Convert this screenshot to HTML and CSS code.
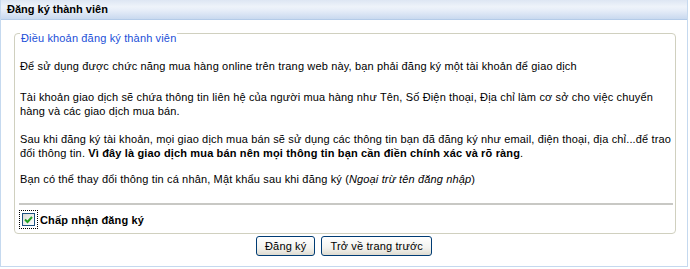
FILE: index.html
```html
<!DOCTYPE html>
<html lang="vi">
<head>
  <meta charset="utf-8">
  <title>Đăng ký thành viên</title>
  <link rel="stylesheet" href="styles.css">
</head>
<body>

<div class="panel">
  <div class="panel__head">Đăng ký thành viên</div>

  <div class="panel__body">
    <fieldset class="terms">
      <legend class="terms__title">Điều khoản đăng ký thành viên</legend>

      <p class="terms__text terms__text--intro">Để sử dụng được chức năng mua hàng online trên trang web này, bạn phải đăng ký một tài khoản để giao dịch</p>
      <p class="terms__text">Tài khoản giao dịch sẽ chứa thông tin liên hệ của người mua hàng như Tên, Số Điện thoại, Địa chỉ làm cơ sở cho việc chuyển hàng và các giao dịch mua bán.</p>
      <p class="terms__text terms__text--tight">Sau khi đăng ký tài khoản, mọi giao dịch mua bán sẽ sử dụng các thông tin bạn đã đăng ký như email, điện thoại, địa chỉ...để trao đổi thông tin. <b>Vì đây là giao dịch mua bán nên mọi thông tin bạn cần điền chính xác và rõ ràng</b>.</p>
      <p class="terms__text terms__text--last">Bạn có thể thay đổi thông tin cá nhân, Mật khẩu sau khi đăng ký (<i>Ngoại trừ tên đăng nhập</i>)</p>

      <hr class="terms__rule">

      <label class="accept">
        <span class="accept__box">
          <svg width="9" height="8" viewBox="0 0 9 8"><path d="M1 3.5 L3.5 6 L8 1" fill="none" stroke="#21a121" stroke-width="2"/></svg>
        </span>
        Chấp nhận đăng ký
      </label>
    </fieldset>

    <div class="actions">
      <button class="btn" type="button">Đăng ký</button>
      <button class="btn" type="button">Trở về trang trước</button>
    </div>
  </div>
</div>

</body>
</html>
```

FILE: styles.css
```css
html {
   background: white;
}

body {
   margin: 0;
   padding: 0;
   font-family: "Liberation Sans", Arial, sans-serif;
   font-size: 11px;
   color: #000;
}

.panel {
   width: 686px;
   height: 266px;
   border: 1px solid #c5d9ef;
   border-top: 0;
}

.panel__head {
   height: 19px;
   line-height: 18px;
   padding-left: 6px;
   font-weight: bold;
   font-size: 11px;
   color: #000;
   background: linear-gradient(#dde6f3 0%, #eef3fa 35%, #e6edf8 55%, #c9d9ef 100%);
   border-bottom: 1px solid #b4cbe8;
}

.panel__body {
   padding-top: 7px;
}

.terms {
   width: 662px;
   margin: 0 0 0 13px;
   padding: 0 2px 3px 5px;
   border: 1px solid #d0d0bf;
   border-radius: 4px;
   box-sizing: border-box;
   min-width: 0;
   letter-spacing: 0.15px;
}

.terms__title {
   padding: 0 1px;
   line-height: 13px;
   color: #1b4fd8;
   font-size: 11px;
   transform: translateY(5px);
}

.terms__text {
   margin: 0 0 14px;
   line-height: 14px;
}

.terms__text--intro {
   margin-top: 19px;
   margin-bottom: 17px;
}

.terms__text--tight {
   margin-bottom: 12px;
}

.terms__text--last {
   margin-bottom: 0;
}

.terms__rule {
   margin: 17px 0 4px -1px;
   height: 2px;
   border: 0;
   background: #c8c8c4;
}

.accept {
   display: flex;
   align-items: center;
   font-weight: bold;
   line-height: 14px;
   margin-left: -1px;
}

.accept__box {
   display: flex;
   align-items: center;
   justify-content: center;
   width: 11px;
   height: 11px;
   border: 1px solid #1c5180;
   background: linear-gradient(135deg, #dcdcd7, #fff);
   outline: 1px dotted #000;
   outline-offset: 2px;
   margin: 4px 5px 4px 3px;
}

.actions {
   display: flex;
   justify-content: center;
   gap: 6px;
   padding-top: 2px;
}

.btn {
   height: 20px;
   padding: 0 8px;
   font-family: "Liberation Sans", Arial, sans-serif;
   font-size: 11px;
   letter-spacing: 0.15px;
   color: #000;
   border: 1px solid #003c74;
   border-radius: 3px;
   background: linear-gradient(#ffffff 0%, #f3f3ef 60%, #dedbd0 100%);
}
```
